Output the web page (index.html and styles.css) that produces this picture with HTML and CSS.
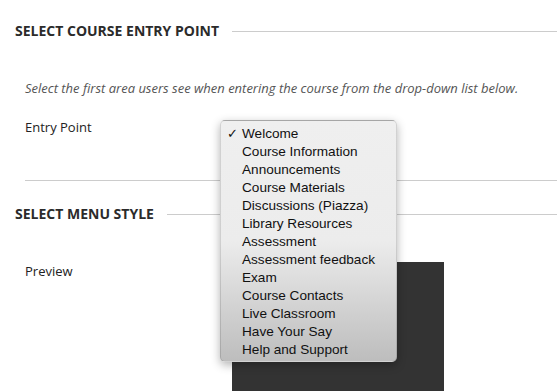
FILE: index.html
```html
<!DOCTYPE html>
<html lang="en">
<head>
  <meta charset="UTF-8" />
  <title>Course Settings - Entry Point</title>
  <link rel="stylesheet" href="styles.css">
</head>
<body>
  <div class="page">
    <div class="section-head">
      <h2>Select Course Entry Point</h2>
    </div>

    <p class="instructions">Select the first area users see when entering the course from the drop-down list below.</p>

    <div class="field-row">
      <span class="field-label">Entry Point</span>
    </div>

    <hr class="divider" />

    <div class="section-head menu-head">
      <h2>Select Menu Style</h2>
    </div>

    <div class="preview-row">
      <span class="field-label">Preview</span>
      <div class="preview-box"></div>
    </div>

    <ul class="dropdown">
      <li class="selected"><span class="check">✓</span>Welcome</li>
      <li><span class="check"></span>Course Information</li>
      <li><span class="check"></span>Announcements</li>
      <li><span class="check"></span>Course Materials</li>
      <li><span class="check"></span>Discussions (Piazza)</li>
      <li><span class="check"></span>Library Resources</li>
      <li><span class="check"></span>Assessment</li>
      <li><span class="check"></span>Assessment feedback</li>
      <li><span class="check"></span>Exam</li>
      <li><span class="check"></span>Course Contacts</li>
      <li><span class="check"></span>Live Classroom</li>
      <li><span class="check"></span>Have Your Say</li>
      <li><span class="check"></span>Help and Support</li>
    </ul>
  </div>
</body>
</html>
```

FILE: styles.css
```css
body {
  font-family: 'Open Sans', sans-serif;
  background: #fff;
  color: #333;
  margin: 0;
  padding: 0;
  overflow: hidden;
}

.page {
  position: relative;
  height: 391px;
  box-sizing: border-box;
  padding-top: 21px;
  overflow: hidden;
}

.section-head {
  display: flex;
  align-items: center;
  gap: 13px;
  padding-left: 15px;
}

.section-head::after {
  content: '';
  flex: 1;
  height: 1px;
  background: #cccccc;
}

.section-head h2 {
  margin: 0;
  font-size: 14px;
  line-height: 20px;
  font-weight: 700;
  text-transform: uppercase;
  color: #2b2b2b;
}

.instructions {
  margin: 38px 0 0 25px;
  font-size: 13px;
  line-height: 18px;
  font-style: italic;
  color: #555;
}

.field-row {
  margin-top: 18px;
  padding-left: 25px;
}

.field-label {
  font-size: 13px;
  line-height: 18px;
  color: #222;
}

.divider {
  margin: 43px 0 0 25px;
  border: none;
  border-top: 1px solid #cccccc;
}

.menu-head {
  margin-top: 23px;
}

.preview-row {
  display: flex;
  padding-left: 25px;
  margin-top: 38px;
}

.preview-row .field-label {
  width: 207px;
}

.preview-box {
  width: 212px;
  height: 140px;
  background: #333333;
}

.dropdown {
  position: absolute;
  left: 220px;
  top: 120px;
  width: 177px;
  height: 242px;
  box-sizing: border-box;
  margin: 0;
  padding: 4px 0 0;
  list-style: none;
  font-family: 'Liberation Sans', Arial, sans-serif;
  font-size: 13.6px;
  line-height: 18px;
  color: #111;
  background: linear-gradient(to bottom, #efefef 0%, #ececec 50%, #bdbdbd 100%);
  border: 1px solid rgba(0,0,0,0.12);
  border-radius: 5px;
  box-shadow: 0 3px 10px rgba(0,0,0,0.3);
}

.dropdown li {
  display: flex;
}

.check {
  width: 21px;
  padding-left: 6px;
  box-sizing: border-box;
  font-family: 'DejaVu Sans', sans-serif;
  font-size: 13px;
  font-weight: 700;
}
```
